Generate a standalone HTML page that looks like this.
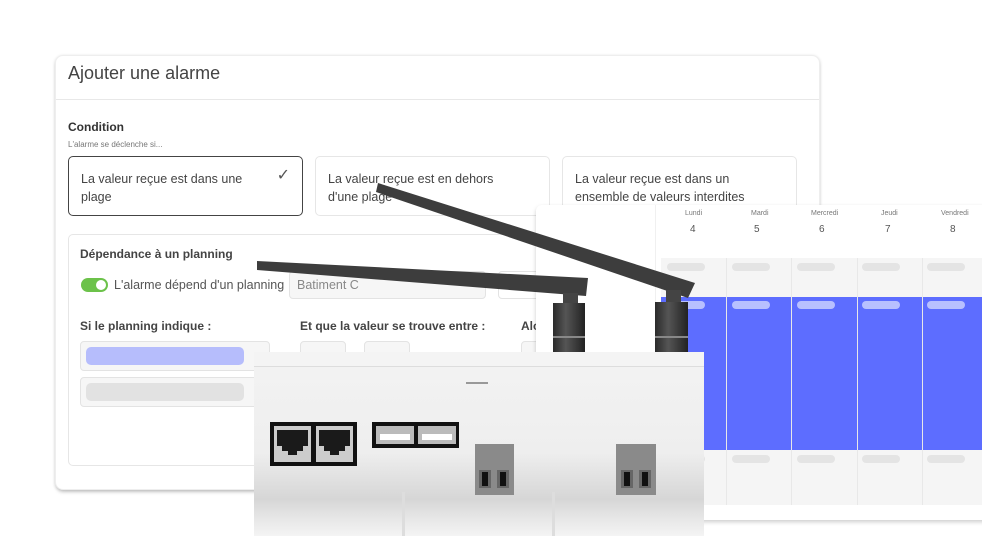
<!DOCTYPE html>
<html><head><meta charset="utf-8"><style>
*{box-sizing:border-box;margin:0;padding:0}
body{width:982px;height:538px;background:#fff;position:relative;overflow:hidden;font-family:"Liberation Sans",sans-serif;color:#333}
.abs{position:absolute}
.card{left:55px;top:55px;width:765px;height:435px;background:#fff;border-radius:8px;box-shadow:0 1px 3px rgba(0,0,0,.18),0 4px 4px -2px rgba(0,0,0,.15);border:1px solid #eee}
.opt{top:156px;height:60px;width:235px;border:1px solid #e6e6e6;border-radius:5px;padding:13px 12px;font-size:12.5px;line-height:18px;color:#444}
.box{border:1px solid #e3e3e3;border-radius:4px;background:#f6f6f6}
.pill{position:absolute;height:8px;border-radius:4px;background:#e4e4e4}
.pb{position:absolute;height:8px;border-radius:4px;background:#b8c0ff}
</style></head><body>
<div class="abs card"></div>
<div class="abs" style="left:56px;top:99px;width:763px;height:1px;background:#e8e8e8"></div>
<div class="abs" style="left:68px;top:63px;font-size:18px;color:#444">Ajouter une alarme</div>
<div class="abs" style="left:68px;top:120px;font-size:12px;font-weight:bold;color:#333">Condition</div>
<div class="abs" style="left:68px;top:140px;font-size:8px;color:#777">L'alarme se déclenche si...</div>
<div class="abs opt" style="left:68px;border-color:#444">La valeur reçue est dans une<br>plage<span style="position:absolute;right:12px;top:10px;font-size:16px;color:#555">✓</span></div>
<div class="abs opt" style="left:315px">La valeur reçue est en dehors<br>d'une plage</div>
<div class="abs opt" style="left:562px">La valeur reçue est dans un<br>ensemble de valeurs interdites</div>
<div class="abs" style="left:68px;top:234px;width:750px;height:232px;border:1px solid #e6e6e6;border-radius:5px"></div>
<div class="abs" style="left:80px;top:247px;font-size:12px;font-weight:bold;color:#444">Dépendance à un planning</div>
<div class="abs" style="left:81px;top:278px;width:27px;height:14px;border-radius:7px;background:#6cc24a"><div style="position:absolute;right:2px;top:2px;width:10px;height:10px;border-radius:5px;background:#fff"></div></div>
<div class="abs" style="left:114px;top:278px;font-size:12.5px;color:#555">L'alarme dépend d'un planning</div>
<div class="abs box" style="left:289px;top:271px;width:197px;height:28px;padding:6px 7px;font-size:12.5px;color:#888">Batiment C</div>
<div class="abs box" style="left:498px;top:271px;width:60px;height:28px;background:#fff"></div>
<div class="abs" style="left:80px;top:319px;font-size:12px;font-weight:bold;color:#444">Si le planning indique :</div>
<div class="abs" style="left:300px;top:319px;font-size:12px;font-weight:bold;color:#444">Et que la valeur se trouve entre :</div>
<div class="abs" style="left:521px;top:319px;font-size:12px;font-weight:bold;color:#444">Alors</div>
<div class="abs box" style="left:80px;top:341px;width:190px;height:30px"><div style="position:absolute;left:5px;top:5px;width:158px;height:18px;border-radius:5px;background:#b6bdfc"></div></div>
<div class="abs box" style="left:80px;top:377px;width:190px;height:30px"><div style="position:absolute;left:5px;top:5px;width:158px;height:18px;border-radius:5px;background:#e2e2e2"></div></div>
<div class="abs box" style="left:300px;top:341px;width:46px;height:20px"></div>
<div class="abs box" style="left:364px;top:341px;width:46px;height:20px"></div>
<div class="abs box" style="left:521px;top:341px;width:20px;height:20px"></div>

<!-- calendar -->
<div class="abs" style="left:536px;top:205px;width:460px;height:315px;background:#fff;border-radius:6px;box-shadow:0 2px 4px rgba(0,0,0,.2)"></div>
<div class="abs" style="left:655px;top:205px;width:1px;height:300px;background:#f0f0f0"></div>
<div class="abs" style="left:661px;top:258px;width:321px;height:39px;background:#f5f5f5"></div>
<div class="abs" style="left:661px;top:297px;width:321px;height:153px;background:#5d6dff"></div>
<div class="abs" style="left:661px;top:450px;width:321px;height:55px;background:#f5f5f5"></div>
<div class="abs" style="left:726px;top:258px;width:1px;height:247px;background:#e8e8e8"></div>
<div class="abs" style="left:791px;top:258px;width:1px;height:247px;background:#e8e8e8"></div>
<div class="abs" style="left:857px;top:258px;width:1px;height:247px;background:#e8e8e8"></div>
<div class="abs" style="left:922px;top:258px;width:1px;height:247px;background:#e8e8e8"></div>
<div class="abs" style="left:661px;top:210px;width:321px;font-size:7px;color:#777">
<span class="abs" style="left:24px">Lundi</span><span class="abs" style="left:90px">Mardi</span><span class="abs" style="left:150px">Mercredi</span><span class="abs" style="left:220px">Jeudi</span><span class="abs" style="left:280px">Vendredi</span></div>
<div class="abs" style="left:661px;top:224px;width:321px;font-size:10px;color:#555">
<span class="abs" style="left:29px">4</span><span class="abs" style="left:93px">5</span><span class="abs" style="left:158px">6</span><span class="abs" style="left:224px">7</span><span class="abs" style="left:289px">8</span></div>
<div class="pill" style="left:667px;top:263px;width:38px"></div><div class="pill" style="left:732px;top:263px;width:38px"></div><div class="pill" style="left:797px;top:263px;width:38px"></div><div class="pill" style="left:862px;top:263px;width:38px"></div><div class="pill" style="left:927px;top:263px;width:38px"></div>
<div class="pb" style="left:667px;top:301px;width:38px"></div><div class="pb" style="left:732px;top:301px;width:38px"></div><div class="pb" style="left:797px;top:301px;width:38px"></div><div class="pb" style="left:862px;top:301px;width:38px"></div><div class="pb" style="left:927px;top:301px;width:38px"></div>
<div class="pill" style="left:667px;top:455px;width:38px"></div><div class="pill" style="left:732px;top:455px;width:38px"></div><div class="pill" style="left:797px;top:455px;width:38px"></div><div class="pill" style="left:862px;top:455px;width:38px"></div><div class="pill" style="left:927px;top:455px;width:38px"></div>

<!-- device -->
<svg class="abs" style="left:0;top:0" width="982" height="538">
<defs>
<linearGradient id="cyl" x1="0" x2="1"><stop offset="0" stop-color="#2a2a2a"/><stop offset=".4" stop-color="#555"/><stop offset="1" stop-color="#222"/></linearGradient>
<linearGradient id="body" x1="0" y1="0" x2="0" y2="1"><stop offset="0" stop-color="#f3f3f3"/><stop offset=".55" stop-color="#eeeeee"/><stop offset=".8" stop-color="#d6d6d6"/><stop offset=".9" stop-color="#e6e6e6"/><stop offset="1" stop-color="#f4f4f4"/></linearGradient>
</defs>
<polygon points="378,183 695,283 688,298 376,192" fill="#3d3d3d"/>
<polygon points="257,261 588,278 586,296 257,270" fill="#3d3d3d"/>
<rect x="563" y="293" width="15" height="12" fill="#444"/>
<rect x="666" y="290" width="15" height="14" fill="#444"/>
<rect x="553" y="303" width="32" height="52" fill="url(#cyl)"/>
<rect x="655" y="302" width="33" height="53" fill="url(#cyl)"/>
<rect x="553" y="336" width="32" height="2" fill="#888"/>
<rect x="655" y="336" width="33" height="2" fill="#888"/>
<rect x="254" y="352" width="450" height="184" fill="url(#body)"/>
<rect x="254" y="352" width="450" height="14" fill="#f4f4f4"/>
<rect x="254" y="366" width="450" height="1" fill="#ddd"/>
<rect x="402" y="492" width="3" height="44" fill="#ddd"/>
<rect x="552" y="492" width="3" height="44" fill="#ddd"/>
<rect x="466" y="382" width="22" height="2" fill="#999"/>
<rect x="270" y="422" width="87" height="44" fill="#111"/>
<rect x="274" y="426" width="37" height="36" fill="#ccc"/><rect x="316" y="426" width="37" height="36" fill="#ccc"/>
<path d="M277 430h31v16h-5v5h-6v4h-9v-4h-6v-5h-5z" fill="#1a1a1a"/>
<path d="M319 430h31v16h-5v5h-6v4h-9v-4h-6v-5h-5z" fill="#1a1a1a"/>
<rect x="372" y="422" width="87" height="26" fill="#111"/>
<rect x="376" y="426" width="38" height="18" fill="#bbb"/><rect x="418" y="426" width="38" height="18" fill="#bbb"/>
<rect x="380" y="434" width="30" height="6" fill="#fff"/><rect x="422" y="434" width="30" height="6" fill="#fff"/>
<rect x="475" y="444" width="39" height="51" fill="#8a8a8a"/>
<rect x="616" y="444" width="40" height="51" fill="#8a8a8a"/>
<rect x="479" y="470" width="12" height="18" fill="#666"/><rect x="497" y="470" width="12" height="18" fill="#666"/>
<rect x="482" y="472" width="6" height="14" fill="#111"/><rect x="500" y="472" width="6" height="14" fill="#111"/>
<rect x="621" y="470" width="12" height="18" fill="#666"/><rect x="639" y="470" width="12" height="18" fill="#666"/>
<rect x="624" y="472" width="6" height="14" fill="#111"/><rect x="642" y="472" width="6" height="14" fill="#111"/>
</svg>
</body></html>
